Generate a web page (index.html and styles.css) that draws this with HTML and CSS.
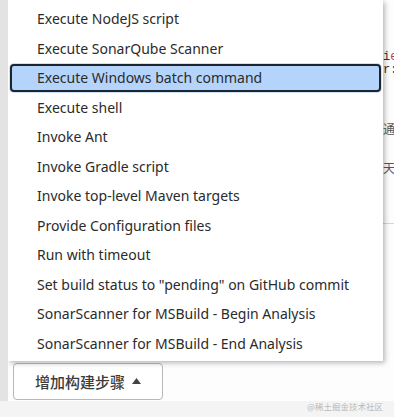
FILE: index.html
```html
<!DOCTYPE html>
<html lang="zh-CN">
<head>
    <meta charset="UTF-8">
    <meta name="viewport" content="width=device-width, initial-scale=1.0">
    <title>Add build step</title>
    <link rel="stylesheet" href="styles.css">
</head>
<body>
    <div class="page">
        <div class="rail"></div>
        <div class="content">
            <div class="editor">
                <div class="code-line code-first">i<span class="kw">e</span></div>
                <div class="code-line">r:</div>
                <div class="hint hint-first">通</div>
                <div class="hint">天</div>
            </div>
            <div class="divider"></div>

            <button class="add-step" type="button">
                增加构建步骤
                <svg class="caret" width="9" height="6" viewBox="0 0 9 6"><path d="M0 6 L4.5 0 L9 6 Z" fill="#444"/></svg>
            </button>

            <ul class="step-menu">
                <li>Execute NodeJS script</li>
                <li>Execute SonarQube Scanner</li>
                <li class="active">Execute Windows batch command</li>
                <li>Execute shell</li>
                <li>Invoke Ant</li>
                <li>Invoke Gradle script</li>
                <li>Invoke top-level Maven targets</li>
                <li>Provide Configuration files</li>
                <li>Run with timeout</li>
                <li>Set build status to "pending" on GitHub commit</li>
                <li>SonarScanner for MSBuild - Begin Analysis</li>
                <li>SonarScanner for MSBuild - End Analysis</li>
            </ul>
        </div>
    </div>
    <footer class="footer">
        <span class="watermark">@稀土掘金技术社区</span>
    </footer>
</body>
</html>
```

FILE: styles.css
```css
:root {
    --text-color: #2b2b2b;
    --rail-color: #e3e3e3;
    --bg-color: #f4f4f4;
    --active-bg: #b5d4fb;
    --active-border: #1c2530;
}

body {
    margin: 0;
    padding: 0;
    background-color: var(--bg-color);
    color: var(--text-color);
    font-family: "Noto Sans", "Noto Sans CJK SC", sans-serif;
}

.page {
    display: grid;
    grid-template-columns: 8px 1fr;
    height: 401px;
}

.rail {
    background-color: var(--rail-color);
}

.content {
    position: relative;
    background-color: #fdfdfd;
    display: flex;
    flex-direction: column;
    overflow: hidden;
}

/* what lies behind the dropdown */
.editor {
    padding: 51px 0 0 375px;
    font-family: "Liberation Mono", "Noto Sans CJK SC", monospace;
    font-size: 12px;
    color: #333;
}

.code-line {
    line-height: 13px;
}

.kw {
    color: #b5472f;
}

.hint {
    line-height: 14px;
    color: #555;
}

.hint-first {
    margin-top: 47px;
}

.hint + .hint {
    margin-top: 25px;
}

.divider {
    margin-top: 46px;
    border-top: 1px solid #d6d6d6;
}

.add-step {
    margin: auto 0 1px 5px;
    align-self: flex-start;
    display: flex;
    align-items: center;
    gap: 7px;
    width: 150px;
    height: 37px;
    padding: 0 18px 0 21px;
    background-color: #fff;
    border: 1px solid #b8b8b8;
    border-radius: 4px;
    font-family: "Noto Sans CJK SC", sans-serif;
    font-size: 15px;
    font-weight: 500;
    color: #3c3c3c;
}

.caret {
    margin-top: -1px;
}

.step-menu {
    position: absolute;
    top: 0;
    left: 0;
    width: 375px;
    margin: 0;
    padding: 4px 0 3px;
    list-style: none;
    background-color: #fff;
    box-shadow: 2px 2px 5px rgba(0, 0, 0, 0.28);
    font-size: 14px;
}

.step-menu li {
    padding: 5px 0 5px 29px;
    line-height: 19.5px;
    white-space: nowrap;
}

.step-menu li.active {
    margin: 1px 2px;
    padding: 2px 0 2px 25px;
    background-color: var(--active-bg);
    border: 2px solid var(--active-border);
    border-radius: 4px;
    box-shadow: 0 0 0 1px #cfe1f7;
}

.footer {
    display: flex;
    justify-content: flex-end;
    padding-right: 11px;
    height: 16px;
}

.watermark {
    font-family: "Noto Sans CJK SC", sans-serif;
    font-size: 8.5px;
    line-height: 10px;
    color: #b9b9b9;
}
```
